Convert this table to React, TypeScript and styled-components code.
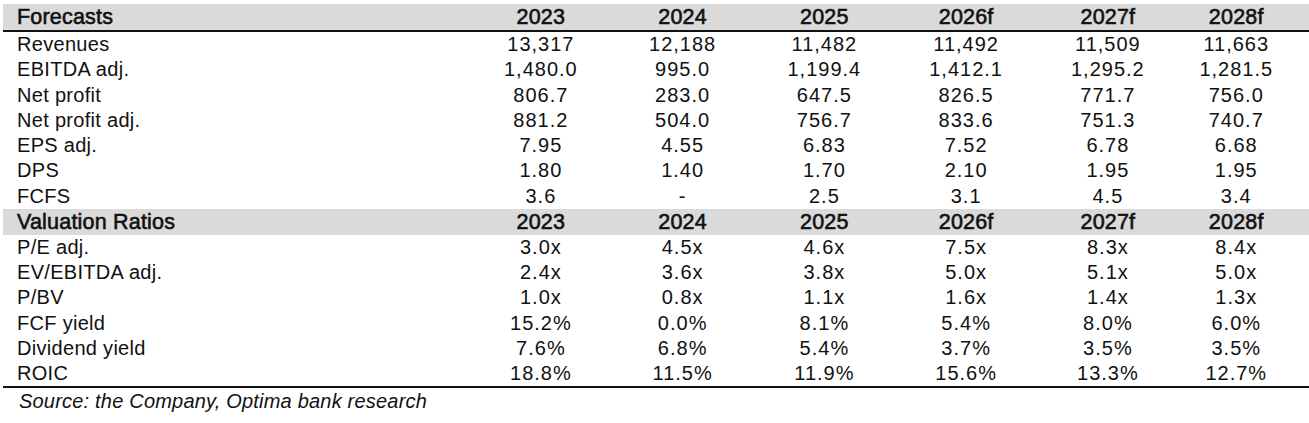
import styled, { createGlobalStyle } from 'styled-components';

const GlobalStyle = createGlobalStyle`
  body {
    margin: 0;
    background: #ffffff;
    color: #111111;
    font-family: 'Liberation Sans', Arial, sans-serif;
  }
`;

type Row = { label: string; values: string[] };

const years = ['2023', '2024', '2025', '2026f', '2027f', '2028f'];

const forecasts: Row[] = [
  { label: 'Revenues', values: ['13,317', '12,188', '11,482', '11,492', '11,509', '11,663'] },
  { label: 'EBITDA adj.', values: ['1,480.0', '995.0', '1,199.4', '1,412.1', '1,295.2', '1,281.5'] },
  { label: 'Net profit', values: ['806.7', '283.0', '647.5', '826.5', '771.7', '756.0'] },
  { label: 'Net profit adj.', values: ['881.2', '504.0', '756.7', '833.6', '751.3', '740.7'] },
  { label: 'EPS adj.', values: ['7.95', '4.55', '6.83', '7.52', '6.78', '6.68'] },
  { label: 'DPS', values: ['1.80', '1.40', '1.70', '2.10', '1.95', '1.95'] },
  { label: 'FCFS', values: ['3.6', '-', '2.5', '3.1', '4.5', '3.4'] },
];

const ratios: Row[] = [
  { label: 'P/E adj.', values: ['3.0x', '4.5x', '4.6x', '7.5x', '8.3x', '8.4x'] },
  { label: 'EV/EBITDA adj.', values: ['2.4x', '3.6x', '3.8x', '5.0x', '5.1x', '5.0x'] },
  { label: 'P/BV', values: ['1.0x', '0.8x', '1.1x', '1.6x', '1.4x', '1.3x'] },
  { label: 'FCF yield', values: ['15.2%', '0.0%', '8.1%', '5.4%', '8.0%', '6.0%'] },
  { label: 'Dividend yield', values: ['7.6%', '6.8%', '5.4%', '3.7%', '3.5%', '3.5%'] },
  { label: 'ROIC', values: ['18.8%', '11.5%', '11.9%', '15.6%', '13.3%', '12.7%'] },
];

const App = () => {
  return (
    <>
      <GlobalStyle />
      <Page>
        <Table>
          <HeadRow $rule>
            <HeadLabel>Forecasts</HeadLabel>
            {years.map((y) => (
              <HeadValue key={y}>{y}</HeadValue>
            ))}
          </HeadRow>
          {forecasts.map((row) => (
            <DataRow key={row.label}>
              <Label>{row.label}</Label>
              {row.values.map((v, i) => (
                <Value key={i}>{v}</Value>
              ))}
            </DataRow>
          ))}
          <HeadRow>
            <HeadLabel>Valuation Ratios</HeadLabel>
            {years.map((y) => (
              <HeadValue key={y}>{y}</HeadValue>
            ))}
          </HeadRow>
          {ratios.map((row, idx) => (
            <DataRow key={row.label} $rule={idx === ratios.length - 1}>
              <Label>{row.label}</Label>
              {row.values.map((v, i) => (
                <Value key={i}>{v}</Value>
              ))}
            </DataRow>
          ))}
        </Table>
        <Source>Source: the Company, Optima bank research</Source>
      </Page>
    </>
  );
};

export default App;

const Page = styled.div`
  padding: 4px 0 0 3px;
`;

const Table = styled.div`
  display: flex;
  flex-direction: column;
`;

const rowColumns = `
  display: grid;
  grid-template-columns: 467px repeat(5, 141.75px) 115px;
  align-items: center;
`;

const HeadRow = styled.div<{ $rule?: boolean }>`
  ${rowColumns}
  height: 26px;
  background: #dadada;
  border-bottom: ${(p) => (p.$rule ? '2px solid #111' : 'none')};
`;

const DataRow = styled.div<{ $rule?: boolean }>`
  ${rowColumns}
  height: 25.25px;
  border-bottom: ${(p) => (p.$rule ? '2px solid #111' : 'none')};
`;

const HeadLabel = styled.div`
  padding-left: 14px;
  font-size: 21.5px;
  letter-spacing: 0.2px;
  -webkit-text-stroke: 0.6px #111;
  line-height: 26px;
  padding-bottom: 2px;
  white-space: nowrap;
`;

const HeadValue = styled.div`
  text-align: center;
  font-size: 21.5px;
  letter-spacing: 0.2px;
  -webkit-text-stroke: 0.6px #111;
  line-height: 26px;
  padding-bottom: 2px;
`;

const Label = styled.div`
  padding-left: 14px;
  font-size: 20px;
  letter-spacing: 0.3px;
  line-height: 25px;
  padding-bottom: 2px;
  white-space: nowrap;
`;

const Value = styled.div`
  text-align: center;
  font-size: 20px;
  letter-spacing: 1px;
  line-height: 25px;
  padding-bottom: 2px;
  white-space: nowrap;
`;

const Source = styled.div`
  padding: 1px 0 0 16px;
  font-size: 20px;
  font-style: italic;
  letter-spacing: 0.2px;
  line-height: 24px;
`;
